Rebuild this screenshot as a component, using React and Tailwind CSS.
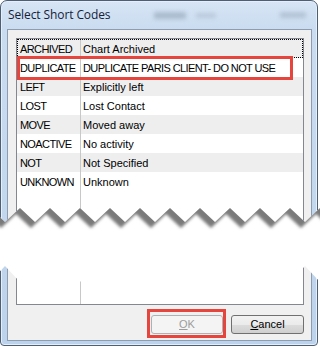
import React from "react";

const rows = [
  ["ARCHIVED", "Chart Archived"],
  ["DUPLICATE", "DUPLICATE PARIS CLIENT- DO NOT USE"],
  ["LEFT", "Explicitly left"],
  ["LOST", "Lost Contact"],
  ["MOVE", "Moved away"],
  ["NOACTIVE", "No activity"],
  ["NOT", "Not Specified"],
  ["UNKNOWN", "Unknown"],
];

const isCaps = (s) => s === s.toUpperCase();

const Tear = () => {
  const top = [];
  for (let x = -10; x <= 335; x += 15) {
    top.push(`${x},${Math.abs((x + 10) / 15) % 2 === 0 ? 8 : 22}`);
  }
  const bottom = [];
  for (let x = 335; x >= -10; x -= 15) {
    bottom.push(`${x},${Math.abs((x - 5) / 15) % 2 === 0 ? 66 : 82}`);
  }
  const paper = [...top, ...bottom].join(" ");
  const above = ["-10,-40", ...top, "335,-40"].join(" ");

  return (
    <svg width="320" height="95" viewBox="0 0 320 95" className="absolute left-0 top-[200px] z-20">
      <defs>
        <clipPath id="paper">
          <polygon points={paper} />
        </clipPath>
        <filter id="soft" x="-20%" y="-50%" width="140%" height="200%">
          <feGaussianBlur stdDeviation="1.4" />
        </filter>
      </defs>
      <polygon points={paper} fill="#ffffff" />
      <g clipPath="url(#paper)">
        <g filter="url(#soft)">
          <polygon points={above} fill="#7a7a7a" transform="translate(-4,6)" />
        </g>
      </g>
    </svg>
  );
};

const App = () => {
  return (
    <div className="relative w-[320px] h-[350px] overflow-hidden bg-white font-['Liberation_Sans',Arial,sans-serif]">
      <div className="w-[318px] h-[346px] flex flex-col rounded-t-[7px] rounded-b-[4px] border border-[#4d5f74] bg-[linear-gradient(180deg,#d7e5f5_0px,#cadcf0_28px,#bdd3eb_100%)] shadow-[inset_0_0_0_1px_#e6eff9]">
        <div className="h-[28px] flex items-center pl-[7px]">
          <span className="text-[12px] text-[#15223a] font-['Open_Sans',sans-serif] tracking-[-0.1px]">
            Select Short Codes
          </span>
          <span className="ml-[44px] w-[32px] h-[7px] bg-[#8797ab] opacity-50 blur-[2px]" />
          <span className="ml-[10px] w-[20px] h-[5px] bg-[#9aa8ba] opacity-40 blur-[2px]" />
          <span className="ml-[64px] w-[26px] h-[6px] bg-[#8797ab] opacity-40 blur-[2px]" />
        </div>

        <div className="ml-[6px] mr-[5px] flex-1 flex flex-col border border-[#8d9db1] bg-[#f0f0f0] pl-[8px] pr-[7px] pt-[8px] pb-[6px]">
          <div className="h-[267px] flex flex-col border border-[#828790] bg-white text-[11px] text-black">
            {rows.map(([code, desc], i) => (
              <div
                key={code}
                className={`relative h-[19px] shrink-0 grid grid-cols-[64px_1fr] items-center leading-[19px] ${
                  i % 2 === 0 ? "bg-[#eeeeee]" : "bg-white"
                } ${i === 0 ? "outline-1 outline-dotted outline-black -outline-offset-1" : ""}`}
              >
                <span className="h-full pl-[3px] pt-[1px] border-r border-[#c8c8c8] tracking-[-0.6px] whitespace-nowrap">
                  {code}
                </span>
                <span
                  className={`pl-[2px] pt-[1px] whitespace-nowrap ${isCaps(desc) ? "tracking-[-0.6px]" : ""}`}
                >
                  {desc}
                </span>
                {code === "DUPLICATE" && (
                  <span className="absolute z-10 left-0 right-[10px] top-[-2px] bottom-[-3px] border-[3px] border-[#e5453c]" />
                )}
              </div>
            ))}
            <div className="flex-1 grid grid-cols-[64px_1fr]">
              <span className="border-r border-[#c8c8c8]" />
              <span />
            </div>
          </div>

          <div className="mt-[10px] flex justify-end gap-[8px] text-[11px]">
            <div className="relative">
              <button className="w-[72px] h-[19px] rounded-[3px] border border-[#adb2b5] bg-[#f4f4f4] text-[#9c9c9c] leading-none">
                <span className="underline underline-offset-[1px]">O</span>K
              </button>
              <span className="absolute left-[-4px] right-[-3px] top-[-6px] bottom-[-4px] border-[3px] border-[#e5453c]" />
            </div>
            <button className="w-[73px] h-[19px] rounded-[3px] border border-[#707070] bg-[linear-gradient(#f2f2f2,#ebebeb_50%,#dddddd_50%,#cfcfcf)] text-black leading-none">
              <span className="underline underline-offset-[1px]">C</span>ancel
            </button>
          </div>
        </div>
        <div className="h-[4px]" />
      </div>
      <Tear />
    </div>
  );
};

export default App;
